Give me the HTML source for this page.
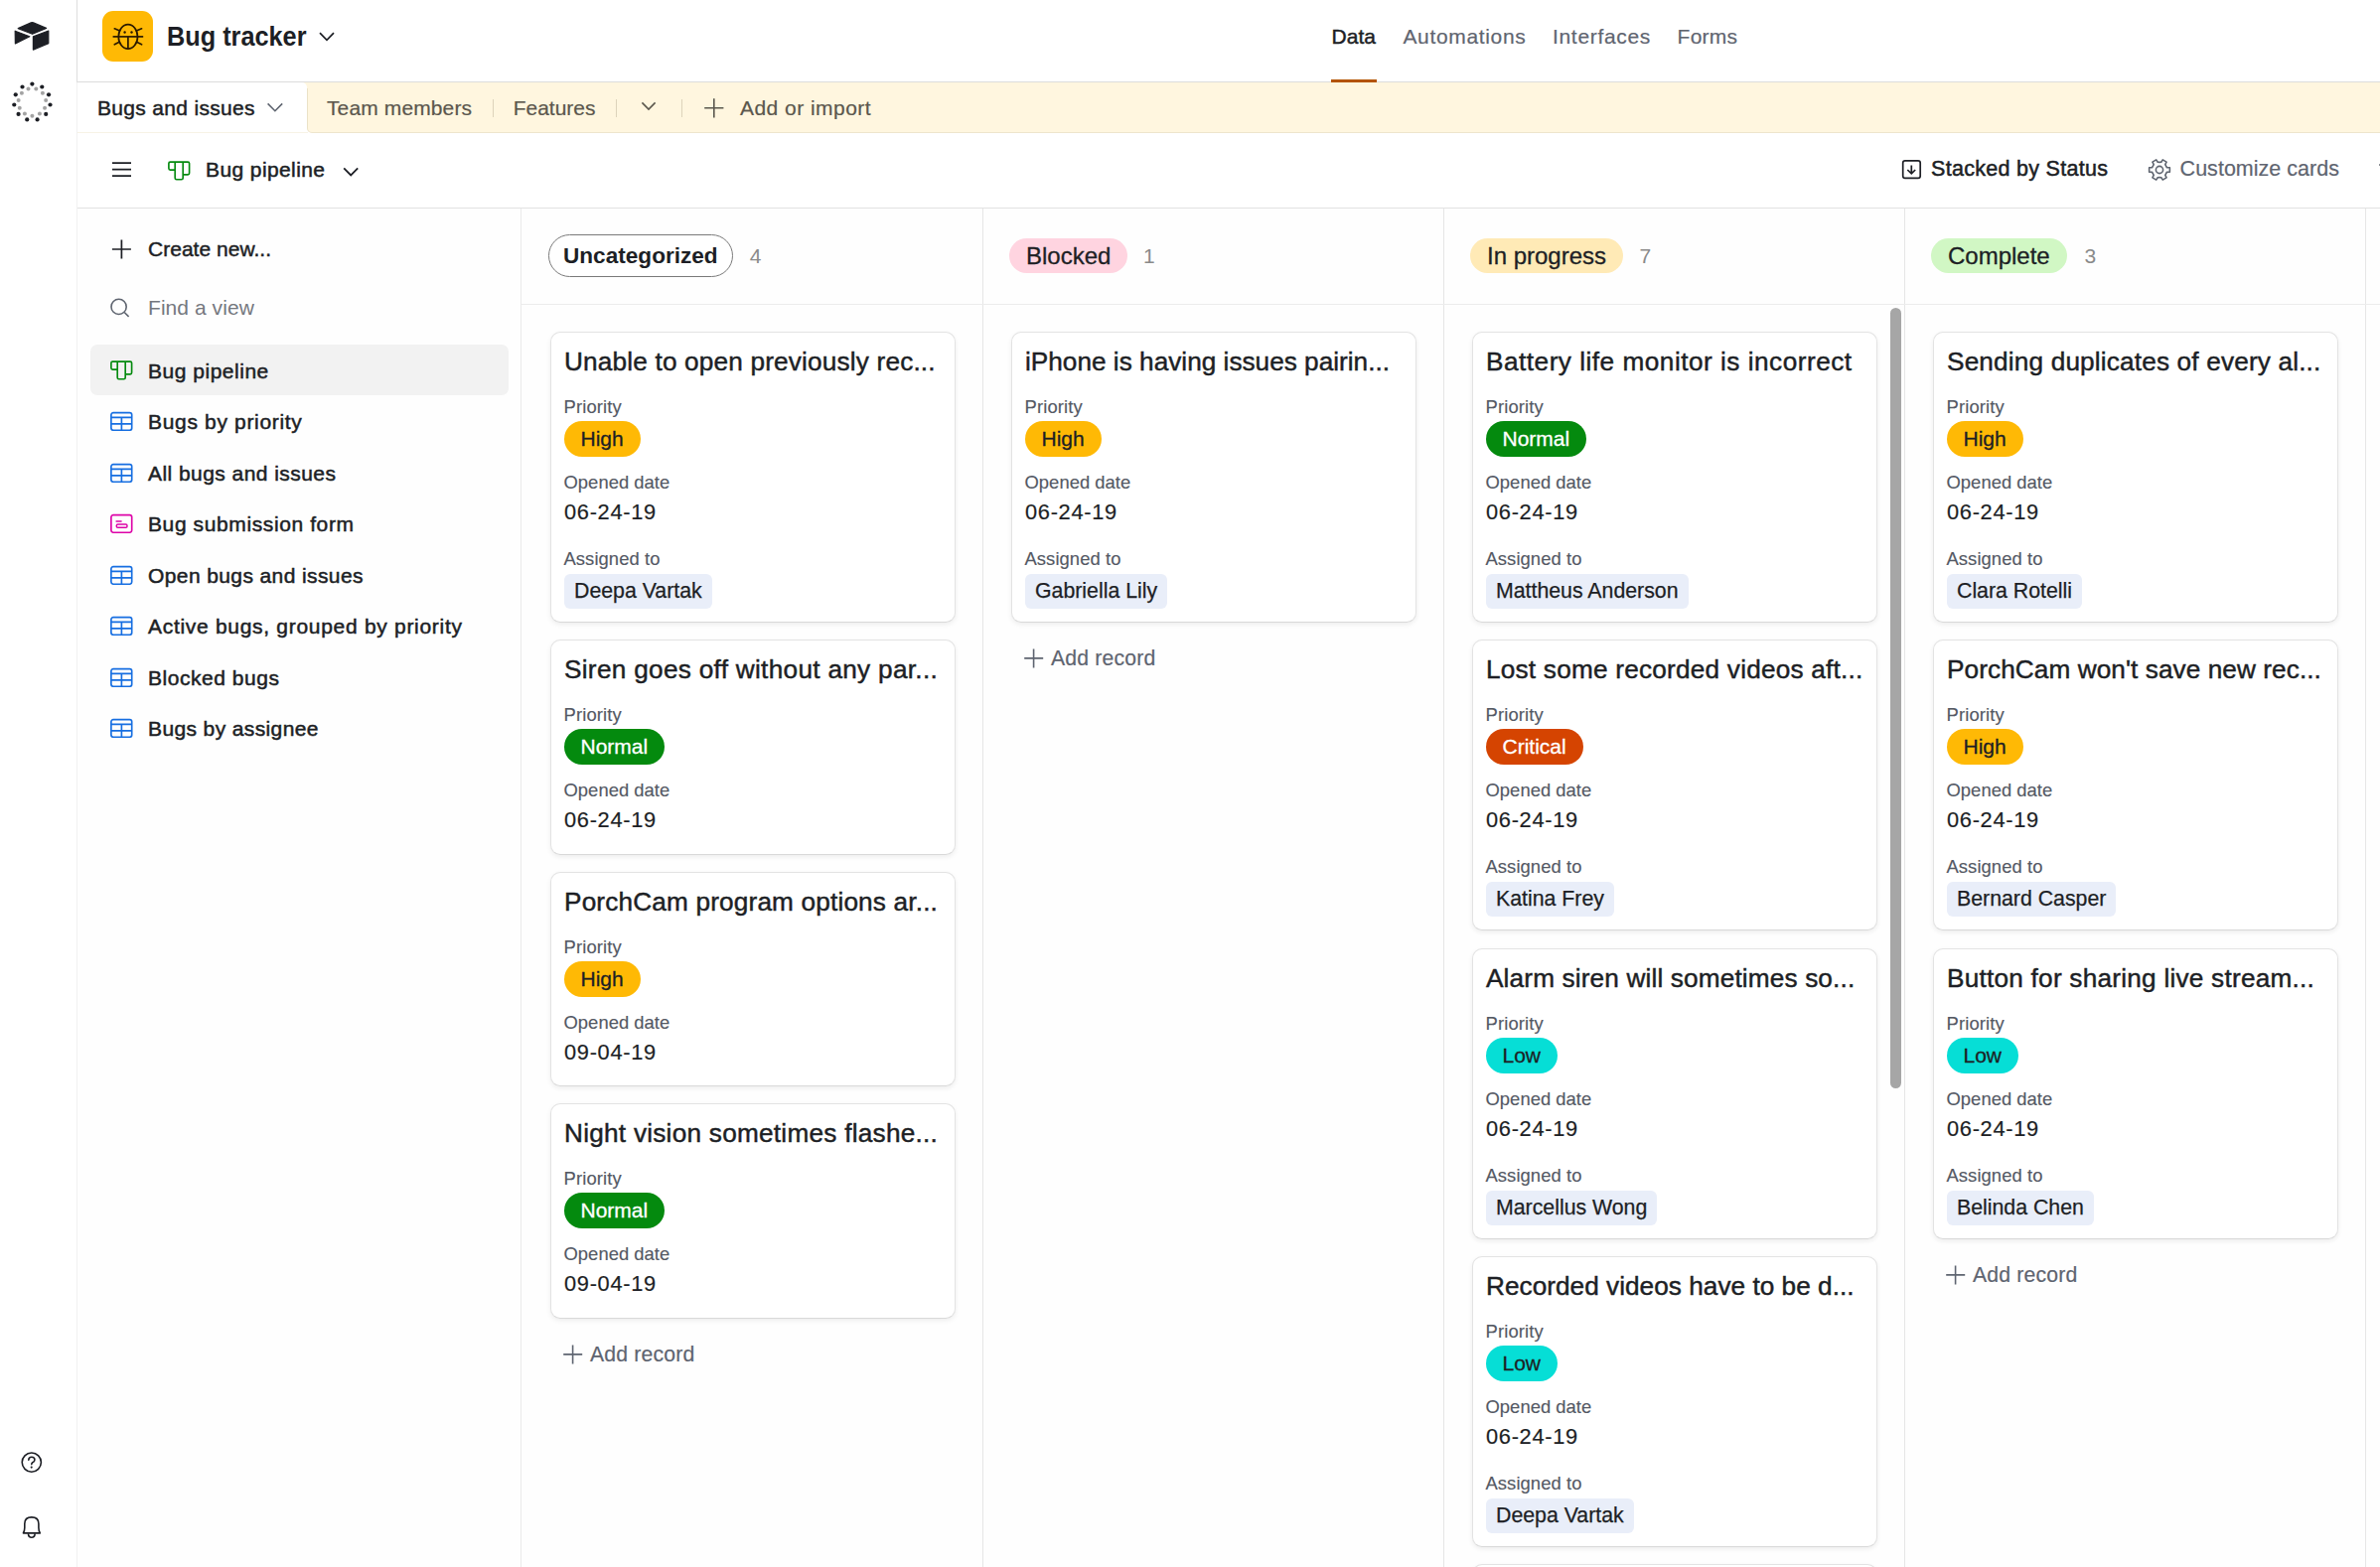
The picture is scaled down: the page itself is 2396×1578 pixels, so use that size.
<!DOCTYPE html>
<html><head><meta charset="utf-8"><title>Bug tracker</title><style>
*{box-sizing:border-box;margin:0;padding:0}
html,body{width:2396px;height:1578px;overflow:hidden;background:#fff;font-family:'Liberation Sans',sans-serif;}
.abs{position:absolute}
.t{position:absolute;line-height:1;white-space:nowrap}
#rail{position:absolute;left:0;top:0;width:78px;height:1578px;background:#fff;border-right:1px solid #f1f1f1}
#hdr{position:absolute;left:78px;top:0;width:2318px;height:83px;background:#fff;border-bottom:1px solid #dcdcdc}
#tabbar{position:absolute;left:78px;top:83px;width:2318px;height:51px;background:#fff}
#toolbar{position:absolute;left:78px;top:134px;width:2318px;height:76px;background:#fff;border-bottom:1px solid #e2e2e2}
#sidebar{position:absolute;left:78px;top:210px;width:447px;height:1368px;background:#fefefe;border-right:1px solid #ebebeb}
.col{position:absolute;top:210px;height:1368px;background:#fefefe;border-right:1px solid #e6e6e6}
.pill{position:absolute;height:35px;line-height:35px;padding:0 17px;border-radius:18px;font-size:24px;color:#1d1f25;white-space:nowrap;-webkit-text-stroke:0.3px #1d1f25}
.pill.unc{top:236px;height:43px;line-height:41px;border:1px solid #7a7a7a;font-weight:bold;font-size:22.6px;padding:0 14px;border-radius:22px;background:#fff;-webkit-text-stroke:0}
.blk{background:#ffd4e0}
.inp{background:#ffeab6}
.cmp{background:#d1f7c4}
.card{position:absolute;width:408px;background:#fff;border:1px solid #e3e3e3;border-bottom-color:#d9d9d9;border-radius:10px;box-shadow:0 2px 5px rgba(0,0,0,0.07)}
.ppill{position:absolute;height:36px;line-height:36px;padding:0 17px 0 16.5px;border-radius:18px;font-size:21px;white-space:nowrap;-webkit-text-stroke:0.3px currentColor}
.chip{position:absolute;height:35px;line-height:35px;padding:0 10px;border-radius:6px;font-size:21.3px;background:#e9eef9;color:#1d1f25;white-space:nowrap;-webkit-text-stroke:0.25px #1d1f25}
</style></head>
<body>
<div id="rail"></div><div class="abs" style="left:77px;top:0;width:1px;height:83px;background:#dedede"></div><svg class="abs" style="left:0;top:0" width="77" height="62" viewBox="0 0 77 62">
<path d="M18.2 28.6 L31.2 22.9 Q32.4 22.4 33.6 22.9 L46.6 28.4 L32.6 34.3 Z" fill="#1d1f25" stroke="#1d1f25" stroke-width="1.2" stroke-linejoin="round"/>
<path d="M15.2 31.2 L29.8 36.8 L15.4 43.9 Z" fill="#1d1f25" stroke="#1d1f25" stroke-width="1.2" stroke-linejoin="round"/>
<path d="M33.4 36.9 L48.8 31.0 L48.8 43.6 L33.4 50.1 Z" fill="#1d1f25" stroke="#1d1f25" stroke-width="1.2" stroke-linejoin="round"/>
</svg><svg class="abs" style="left:0;top:0" width="77" height="140"><circle cx="32.40" cy="84.60" r="2.1" fill="#1d1f25"/><circle cx="36.32" cy="89.56" r="2.0" fill="#a3a3a3"/><circle cx="42.29" cy="87.51" r="2.1" fill="#1d1f25"/><circle cx="42.90" cy="93.80" r="2.0" fill="#a3a3a3"/><circle cx="49.05" cy="95.30" r="2.1" fill="#1d1f25"/><circle cx="46.16" cy="100.92" r="2.0" fill="#a3a3a3"/><circle cx="50.51" cy="105.50" r="2.1" fill="#1d1f25"/><circle cx="45.04" cy="108.67" r="2.0" fill="#a3a3a3"/><circle cx="46.23" cy="114.88" r="2.1" fill="#1d1f25"/><circle cx="39.91" cy="114.59" r="2.0" fill="#a3a3a3"/><circle cx="37.56" cy="120.46" r="2.1" fill="#1d1f25"/><circle cx="32.40" cy="116.80" r="2.0" fill="#a3a3a3"/><circle cx="27.24" cy="120.46" r="2.1" fill="#1d1f25"/><circle cx="24.89" cy="114.59" r="2.0" fill="#a3a3a3"/><circle cx="18.57" cy="114.88" r="2.1" fill="#1d1f25"/><circle cx="19.76" cy="108.67" r="2.0" fill="#a3a3a3"/><circle cx="14.29" cy="105.50" r="2.1" fill="#1d1f25"/><circle cx="18.64" cy="100.92" r="2.0" fill="#a3a3a3"/><circle cx="15.75" cy="95.30" r="2.1" fill="#1d1f25"/><circle cx="21.90" cy="93.80" r="2.0" fill="#a3a3a3"/><circle cx="22.51" cy="87.51" r="2.1" fill="#1d1f25"/><circle cx="28.48" cy="89.56" r="2.0" fill="#a3a3a3"/></svg><svg class="abs" style="left:0;top:1450px" width="77" height="128" viewBox="0 1450 77 128">
<circle cx="31.8" cy="1472.6" r="9.6" fill="none" stroke="#1d1f25" stroke-width="1.6"/>
<path d="M28.8 1470.2 Q28.9 1467.3 31.9 1467.3 Q34.9 1467.3 34.9 1470 Q34.9 1471.8 32.8 1472.8 Q31.8 1473.4 31.8 1474.6" fill="none" stroke="#1d1f25" stroke-width="1.6" stroke-linecap="round"/>
<circle cx="31.7" cy="1477.6" r="1.05" fill="#1d1f25"/>
<path d="M23.4 1543.9 L40.3 1543.9 Q38.9 1541.5 38.9 1538.5 L38.9 1534.5 Q38.9 1527.9 31.8 1527.9 Q24.8 1527.9 24.8 1534.5 L24.8 1538.5 Q24.8 1541.5 23.4 1543.9 Z" fill="none" stroke="#1d1f25" stroke-width="1.6" stroke-linejoin="round"/>
<path d="M28.4 1544.4 Q28.7 1548.3 31.8 1548.3 Q34.9 1548.3 35.2 1544.4" fill="none" stroke="#1d1f25" stroke-width="1.6"/>
</svg><div id="hdr"></div><div class="abs" style="left:103px;top:11px;width:51px;height:51px;border-radius:11px;background:#ffb905"></div><svg class="abs" style="left:103px;top:11px" width="51" height="51" viewBox="103 11 51 51">
<ellipse cx="128.9" cy="36.9" rx="9.6" ry="12.3" fill="none" stroke="#2a1a00" stroke-width="1.7"/>
<line x1="113.6" y1="36.9" x2="144.2" y2="36.9" stroke="#2a1a00" stroke-width="1.7"/>
<line x1="128.9" y1="36.9" x2="128.9" y2="49.2" stroke="#2a1a00" stroke-width="1.7"/>
<circle cx="125.6" cy="32.5" r="1.2" fill="#2a1a00"/><circle cx="132.5" cy="32.5" r="1.2" fill="#2a1a00"/>
<path d="M115.3 28.8 L120.6 31.0 M142.6 28.8 L137.3 31.0 M115.3 44.8 L120.2 42.2 M142.6 44.8 L137.6 42.2" stroke="#2a1a00" stroke-width="1.7" stroke-linecap="round"/>
</svg><div class="t" style="left:167.5px;top:22.7px;font-size:27.8px;color:#1d1f25;font-weight:bold;transform:scaleX(0.9094);transform-origin:0 0;">Bug tracker</div><svg class="abs" style="left:320px;top:31px" width="18" height="12"><path d="M2 2.2 L9 9.4 L16 2.2" fill="none" stroke="#1d1f25" stroke-width="1.7"/></svg><div class="t" style="left:1340.5px;top:26.2px;font-size:21px;color:#1d1f25;font-weight:normal;letter-spacing:0.033px;-webkit-text-stroke:0.45px #1d1f25;">Data</div><div class="abs" style="left:1340px;top:80px;width:46px;height:3px;background:#b35300"></div><div class="t" style="left:1412.4px;top:26.2px;font-size:21px;color:#5f6570;font-weight:normal;letter-spacing:0.670px;-webkit-text-stroke:0.2px #5f6570;">Automations</div><div class="t" style="left:1563.0px;top:26.2px;font-size:21px;color:#5f6570;font-weight:normal;letter-spacing:0.678px;-webkit-text-stroke:0.2px #5f6570;">Interfaces</div><div class="t" style="left:1688.6px;top:26.2px;font-size:21px;color:#5f6570;font-weight:normal;letter-spacing:0.225px;-webkit-text-stroke:0.2px #5f6570;">Forms</div><div id="tabbar"></div><div class="abs" style="left:78px;top:133px;width:232px;height:1px;background:#f7f3e6"></div><div class="abs" style="left:309px;top:83px;width:2087px;height:51px;background:#fff6df;border-left:1px solid #ebe2c7;border-bottom:1px solid #eee5cd;border-bottom-left-radius:5px"></div><div class="abs" style="left:304px;top:83px;width:6px;height:6px;background:#fff6df"></div><div class="abs" style="left:78px;top:83px;width:231px;height:50px;background:#fff;border-top-right-radius:5px"></div><div class="t" style="left:98.0px;top:98.2px;font-size:21px;color:#1d1f25;font-weight:normal;letter-spacing:0.321px;-webkit-text-stroke:0.45px #1d1f25;">Bugs and issues</div><svg class="abs" style="left:266px;top:101px" width="20" height="14"><path d="M3.6 3.4 L10.9 10.7 L18.2 3.4" fill="none" stroke="#5f6570" stroke-width="1.6"/></svg><div class="t" style="left:329.0px;top:98.2px;font-size:21px;color:#5b574d;font-weight:normal;letter-spacing:0.118px;-webkit-text-stroke:0.2px #5b574d;">Team members</div><div class="abs" style="left:495.5px;top:99.5px;width:1px;height:18px;background:#ddd3bb"></div><div class="t" style="left:516.7px;top:98.2px;font-size:21px;color:#5b574d;font-weight:normal;letter-spacing:-0.014px;-webkit-text-stroke:0.2px #5b574d;">Features</div><div class="abs" style="left:619.5px;top:99.5px;width:1px;height:18px;background:#ddd3bb"></div><svg class="abs" style="left:644px;top:100px" width="18" height="14"><path d="M2.4 3.4 L9 10 L15.6 3.4" fill="none" stroke="#5b574d" stroke-width="1.6"/></svg><div class="abs" style="left:685.5px;top:99.5px;width:1px;height:18px;background:#ddd3bb"></div><svg class="abs" style="left:705px;top:96px" width="26" height="26"><path d="M13.8 3.2 L13.8 22.4 M4.2 12.8 L23.4 12.8" fill="none" stroke="#5b574d" stroke-width="1.6"/></svg><div class="t" style="left:745.0px;top:98.2px;font-size:21px;color:#5b574d;font-weight:normal;letter-spacing:0.467px;-webkit-text-stroke:0.2px #5b574d;">Add or import</div><div id="toolbar"></div><svg class="abs" style="left:110px;top:160px" width="26" height="22"><path d="M3 4.1 L22 4.1 M3 10.6 L22 10.6 M3 17.2 L22 17.2" stroke="#1d1f25" stroke-width="1.7"/></svg><svg class="abs" style="left:168px;top:160.5px" width="24" height="21" viewBox="0 0 24 21"><path d="M1.9 3.6 Q1.9 2.1 3.4 2.1 L21.1 2.1 Q22.6 2.1 22.6 3.6 L22.6 13.3 Q22.6 14.8 21.1 14.8 L16.2 14.8 L16.2 18.2 Q16.2 19.7 14.7 19.7 L9.7 19.7 Q8.2 19.7 8.2 18.2 L8.2 10.1 L3.4 10.1 Q1.9 10.1 1.9 8.6 Z M8.2 2.1 L8.2 10.1 M16.2 2.1 L16.2 14.8" fill="none" stroke="#048a0e" stroke-width="1.65" stroke-linejoin="round"/></svg><div class="t" style="left:207.0px;top:160.2px;font-size:21px;color:#1d1f25;font-weight:normal;letter-spacing:0.400px;-webkit-text-stroke:0.5px #1d1f25;">Bug pipeline</div><svg class="abs" style="left:343px;top:166px" width="20" height="14"><path d="M3.2 3.4 L10.2 10.4 L17.2 3.4" fill="none" stroke="#1d1f25" stroke-width="1.8"/></svg><svg class="abs" style="left:1912px;top:158px" width="26" height="26" viewBox="0 0 26 26">
<rect x="3.7" y="3.9" width="17.5" height="17.5" rx="2.2" fill="none" stroke="#1d1f25" stroke-width="1.7"/>
<path d="M12.3 8.4 L12.3 16.6 M8.3 13 L12.3 16.8 L16.2 13" fill="none" stroke="#1d1f25" stroke-width="1.7"/></svg><div class="t" style="left:1944.0px;top:160.0px;font-size:21.5px;color:#1d1f25;font-weight:normal;letter-spacing:0.294px;-webkit-text-stroke:0.5px #1d1f25;">Stacked by Status</div><svg class="abs" style="left:2161.4px;top:157.7px" width="26" height="26" viewBox="0 0 26 26">
<path d="M19.58 9.20 L20.55 10.69 L23.37 10.80 L23.37 15.20 L20.55 15.31 L19.58 16.80 L18.78 18.39 L20.09 20.88 L16.28 23.08 L14.78 20.70 L13.00 20.60 L11.22 20.70 L9.72 23.08 L5.91 20.88 L7.22 18.39 L6.42 16.80 L5.45 15.31 L2.63 15.20 L2.63 10.80 L5.45 10.69 L6.42 9.20 L7.22 7.61 L5.91 5.12 L9.72 2.92 L11.22 5.30 L13.00 5.40 L14.78 5.30 L16.28 2.92 L20.09 5.12 L18.78 7.61 Z" fill="none" stroke="#5f6570" stroke-width="1.6" stroke-linejoin="round"/>
<circle cx="13" cy="13" r="3.6" fill="none" stroke="#5f6570" stroke-width="1.6"/></svg><div class="t" style="left:2194.6px;top:160.0px;font-size:21.5px;color:#5f6570;font-weight:normal;letter-spacing:0.021px;-webkit-text-stroke:0.2px #5f6570;">Customize cards</div><div class="abs" style="left:2395px;top:164.8px;width:1px;height:2.4px;background:#8a8d93"></div><div id="sidebar"></div><svg class="abs" style="left:110px;top:239px" width="24" height="24"><path d="M12.4 2.5 L12.4 21.5 M2.9 12 L21.9 12" stroke="#1d1f25" stroke-width="1.7"/></svg><div class="t" style="left:149.0px;top:240.4px;font-size:21px;color:#1d1f25;font-weight:normal;letter-spacing:0.025px;-webkit-text-stroke:0.45px #1d1f25;">Create new...</div><svg class="abs" style="left:109px;top:298px" width="24" height="24"><circle cx="10.6" cy="10.9" r="7.6" fill="none" stroke="#5f6570" stroke-width="1.6"/><path d="M16.2 16.5 L20.6 20.9" stroke="#5f6570" stroke-width="1.6"/></svg><div class="t" style="left:149.0px;top:299.0px;font-size:21px;color:#75787e;font-weight:normal;letter-spacing:0.060px;">Find a view</div><div class="abs" style="left:91px;top:347px;width:421px;height:51px;border-radius:7px;background:#f2f2f2"></div><svg class="abs" style="left:110px;top:361.9px" width="24" height="21" viewBox="0 0 24 21"><path d="M1.9 3.6 Q1.9 2.1 3.4 2.1 L21.1 2.1 Q22.6 2.1 22.6 3.6 L22.6 13.3 Q22.6 14.8 21.1 14.8 L16.2 14.8 L16.2 18.2 Q16.2 19.7 14.7 19.7 L9.7 19.7 Q8.2 19.7 8.2 18.2 L8.2 10.1 L3.4 10.1 Q1.9 10.1 1.9 8.6 Z M8.2 2.1 L8.2 10.1 M16.2 2.1 L16.2 14.8" fill="none" stroke="#048a0e" stroke-width="1.65" stroke-linejoin="round"/></svg><div class="t" style="left:149.0px;top:362.6px;font-size:21px;color:#1d1f25;font-weight:normal;letter-spacing:0.518px;-webkit-text-stroke:0.5px #1d1f25;">Bug pipeline</div><svg class="abs" style="left:110px;top:413.4px" width="24" height="21" viewBox="0 0 24 21"><rect x="1.9" y="2.6" width="20.8" height="17.6" rx="2.2" fill="none" stroke="#166ee1" stroke-width="1.65"/><path d="M1.9 7.3 L22.7 7.3 M1.9 13.8 L22.7 13.8 M12.4 7.3 L12.4 20.2" stroke="#166ee1" stroke-width="1.65"/></svg><div class="t" style="left:149.0px;top:414.1px;font-size:21px;color:#1d1f25;font-weight:normal;letter-spacing:0.673px;-webkit-text-stroke:0.5px #1d1f25;">Bugs by priority</div><svg class="abs" style="left:110px;top:464.9px" width="24" height="21" viewBox="0 0 24 21"><rect x="1.9" y="2.6" width="20.8" height="17.6" rx="2.2" fill="none" stroke="#166ee1" stroke-width="1.65"/><path d="M1.9 7.3 L22.7 7.3 M1.9 13.8 L22.7 13.8 M12.4 7.3 L12.4 20.2" stroke="#166ee1" stroke-width="1.65"/></svg><div class="t" style="left:149.0px;top:465.6px;font-size:21px;color:#1d1f25;font-weight:normal;letter-spacing:0.444px;-webkit-text-stroke:0.5px #1d1f25;">All bugs and issues</div><svg class="abs" style="left:110px;top:516.4px" width="24" height="21" viewBox="0 0 24 21"><rect x="1.9" y="2.6" width="20.8" height="17.6" rx="2.2" fill="none" stroke="#dd04a8" stroke-width="1.65"/><path d="M7.2 9 L12 9" stroke="#dd04a8" stroke-width="1.65" stroke-linecap="round"/><rect x="7.3" y="12.1" width="10.7" height="3.2" rx="1.4" fill="none" stroke="#dd04a8" stroke-width="1.5"/></svg><div class="t" style="left:149.0px;top:517.1px;font-size:21px;color:#1d1f25;font-weight:normal;letter-spacing:0.606px;-webkit-text-stroke:0.5px #1d1f25;">Bug submission form</div><svg class="abs" style="left:110px;top:567.9px" width="24" height="21" viewBox="0 0 24 21"><rect x="1.9" y="2.6" width="20.8" height="17.6" rx="2.2" fill="none" stroke="#166ee1" stroke-width="1.65"/><path d="M1.9 7.3 L22.7 7.3 M1.9 13.8 L22.7 13.8 M12.4 7.3 L12.4 20.2" stroke="#166ee1" stroke-width="1.65"/></svg><div class="t" style="left:149.0px;top:568.6px;font-size:21px;color:#1d1f25;font-weight:normal;letter-spacing:0.395px;-webkit-text-stroke:0.5px #1d1f25;">Open bugs and issues</div><svg class="abs" style="left:110px;top:619.4px" width="24" height="21" viewBox="0 0 24 21"><rect x="1.9" y="2.6" width="20.8" height="17.6" rx="2.2" fill="none" stroke="#166ee1" stroke-width="1.65"/><path d="M1.9 7.3 L22.7 7.3 M1.9 13.8 L22.7 13.8 M12.4 7.3 L12.4 20.2" stroke="#166ee1" stroke-width="1.65"/></svg><div class="t" style="left:149.0px;top:620.1px;font-size:21px;color:#1d1f25;font-weight:normal;letter-spacing:0.703px;-webkit-text-stroke:0.5px #1d1f25;">Active bugs, grouped by priority</div><svg class="abs" style="left:110px;top:670.9px" width="24" height="21" viewBox="0 0 24 21"><rect x="1.9" y="2.6" width="20.8" height="17.6" rx="2.2" fill="none" stroke="#166ee1" stroke-width="1.65"/><path d="M1.9 7.3 L22.7 7.3 M1.9 13.8 L22.7 13.8 M12.4 7.3 L12.4 20.2" stroke="#166ee1" stroke-width="1.65"/></svg><div class="t" style="left:149.0px;top:671.6px;font-size:21px;color:#1d1f25;font-weight:normal;letter-spacing:0.536px;-webkit-text-stroke:0.5px #1d1f25;">Blocked bugs</div><svg class="abs" style="left:110px;top:722.4px" width="24" height="21" viewBox="0 0 24 21"><rect x="1.9" y="2.6" width="20.8" height="17.6" rx="2.2" fill="none" stroke="#166ee1" stroke-width="1.65"/><path d="M1.9 7.3 L22.7 7.3 M1.9 13.8 L22.7 13.8 M12.4 7.3 L12.4 20.2" stroke="#166ee1" stroke-width="1.65"/></svg><div class="t" style="left:149.0px;top:723.1px;font-size:21px;color:#1d1f25;font-weight:normal;letter-spacing:0.380px;-webkit-text-stroke:0.5px #1d1f25;">Bugs by assignee</div><div class="col" style="left:525px;width:465px"></div><div class="col" style="left:990px;width:464px"></div><div class="col" style="left:1454px;width:464px"></div><div class="col" style="left:1918px;width:464px"></div><div class="col" style="left:2382px;width:464px"></div><div class="abs" style="left:525px;top:306px;width:1871px;height:1px;background:#ececec"></div><div class="pill unc" style="left:552px;top:236px;">Uncategorized</div><div class="pill blk" style="left:1016px;top:240px;">Blocked</div><div class="pill inp" style="left:1480px;top:240px;">In progress</div><div class="pill cmp" style="left:1944px;top:240px;">Complete</div><div class="t" style="left:754.7px;top:246.8px;font-size:21px;color:#8a8a8a;font-weight:normal;">4</div><div class="t" style="left:1151.0px;top:246.8px;font-size:21px;color:#8a8a8a;font-weight:normal;">1</div><div class="t" style="left:1650.5px;top:246.8px;font-size:21px;color:#8a8a8a;font-weight:normal;">7</div><div class="t" style="left:2098.5px;top:246.8px;font-size:21px;color:#8a8a8a;font-weight:normal;">3</div><div class="card" style="left:554px;top:334px;height:293px"></div><div class="t" style="left:568.0px;top:351.1px;font-size:26.2px;color:#1d1f25;font-weight:normal;letter-spacing:0.171px;-webkit-text-stroke:0.45px #1d1f25;">Unable to open previously rec...</div><div class="t" style="left:567.5px;top:401.0px;font-size:18.4px;color:#545964;font-weight:normal;letter-spacing:0.143px;-webkit-text-stroke:0.15px #545964;">Priority</div><div class="ppill" style="left:568px;top:424px;background:#ffb905;color:#1d1f25">High</div><div class="t" style="left:567.5px;top:476.5px;font-size:18.4px;color:#545964;font-weight:normal;letter-spacing:0.040px;-webkit-text-stroke:0.15px #545964;">Opened date</div><div class="t" style="left:568.0px;top:505.0px;font-size:21.8px;color:#1d1f25;font-weight:normal;letter-spacing:0.700px;-webkit-text-stroke:0.2px #1d1f25;">06-24-19</div><div class="t" style="left:567.5px;top:553.6px;font-size:18.4px;color:#545964;font-weight:normal;letter-spacing:0.080px;-webkit-text-stroke:0.15px #545964;">Assigned to</div><div class="chip" style="left:568px;top:577.8px">Deepa Vartak</div><div class="card" style="left:554px;top:644px;height:217px"></div><div class="t" style="left:568.0px;top:661.1px;font-size:26.2px;color:#1d1f25;font-weight:normal;letter-spacing:0.294px;-webkit-text-stroke:0.45px #1d1f25;">Siren goes off without any par...</div><div class="t" style="left:567.5px;top:711.0px;font-size:18.4px;color:#545964;font-weight:normal;letter-spacing:0.143px;-webkit-text-stroke:0.15px #545964;">Priority</div><div class="ppill" style="left:568px;top:734px;background:#048a0e;color:#ffffff">Normal</div><div class="t" style="left:567.5px;top:786.5px;font-size:18.4px;color:#545964;font-weight:normal;letter-spacing:0.040px;-webkit-text-stroke:0.15px #545964;">Opened date</div><div class="t" style="left:568.0px;top:815.0px;font-size:21.8px;color:#1d1f25;font-weight:normal;letter-spacing:0.700px;-webkit-text-stroke:0.2px #1d1f25;">06-24-19</div><div class="card" style="left:554px;top:878px;height:216px"></div><div class="t" style="left:568.0px;top:895.1px;font-size:26.2px;color:#1d1f25;font-weight:normal;letter-spacing:0.162px;-webkit-text-stroke:0.45px #1d1f25;">PorchCam program options ar...</div><div class="t" style="left:567.5px;top:945.0px;font-size:18.4px;color:#545964;font-weight:normal;letter-spacing:0.143px;-webkit-text-stroke:0.15px #545964;">Priority</div><div class="ppill" style="left:568px;top:968px;background:#ffb905;color:#1d1f25">High</div><div class="t" style="left:567.5px;top:1020.5px;font-size:18.4px;color:#545964;font-weight:normal;letter-spacing:0.040px;-webkit-text-stroke:0.15px #545964;">Opened date</div><div class="t" style="left:568.0px;top:1049.0px;font-size:21.8px;color:#1d1f25;font-weight:normal;letter-spacing:0.700px;-webkit-text-stroke:0.2px #1d1f25;">09-04-19</div><div class="card" style="left:554px;top:1111px;height:217px"></div><div class="t" style="left:568.0px;top:1128.1px;font-size:26.2px;color:#1d1f25;font-weight:normal;letter-spacing:0.245px;-webkit-text-stroke:0.45px #1d1f25;">Night vision sometimes flashe...</div><div class="t" style="left:567.5px;top:1178.0px;font-size:18.4px;color:#545964;font-weight:normal;letter-spacing:0.143px;-webkit-text-stroke:0.15px #545964;">Priority</div><div class="ppill" style="left:568px;top:1201px;background:#048a0e;color:#ffffff">Normal</div><div class="t" style="left:567.5px;top:1253.5px;font-size:18.4px;color:#545964;font-weight:normal;letter-spacing:0.040px;-webkit-text-stroke:0.15px #545964;">Opened date</div><div class="t" style="left:568.0px;top:1282.0px;font-size:21.8px;color:#1d1f25;font-weight:normal;letter-spacing:0.700px;-webkit-text-stroke:0.2px #1d1f25;">09-04-19</div><svg class="abs" style="left:564px;top:1352.2px" width="24" height="24"><path d="M12.6 2.4 L12.6 21.4 M3.2 11.9 L22.2 11.9" stroke="#5e6470" stroke-width="1.6"/></svg><div class="t" style="left:594.0px;top:1353.3px;font-size:21.2px;color:#5e6470;font-weight:normal;letter-spacing:0.189px;-webkit-text-stroke:0.2px #5e6470;">Add record</div><div class="card" style="left:1018px;top:334px;height:293px"></div><div class="t" style="left:1032.0px;top:351.1px;font-size:26.2px;color:#1d1f25;font-weight:normal;letter-spacing:0.006px;-webkit-text-stroke:0.45px #1d1f25;">iPhone is having issues pairin...</div><div class="t" style="left:1031.5px;top:401.0px;font-size:18.4px;color:#545964;font-weight:normal;letter-spacing:0.143px;-webkit-text-stroke:0.15px #545964;">Priority</div><div class="ppill" style="left:1032px;top:424px;background:#ffb905;color:#1d1f25">High</div><div class="t" style="left:1031.5px;top:476.5px;font-size:18.4px;color:#545964;font-weight:normal;letter-spacing:0.040px;-webkit-text-stroke:0.15px #545964;">Opened date</div><div class="t" style="left:1032.0px;top:505.0px;font-size:21.8px;color:#1d1f25;font-weight:normal;letter-spacing:0.700px;-webkit-text-stroke:0.2px #1d1f25;">06-24-19</div><div class="t" style="left:1031.5px;top:553.6px;font-size:18.4px;color:#545964;font-weight:normal;letter-spacing:0.080px;-webkit-text-stroke:0.15px #545964;">Assigned to</div><div class="chip" style="left:1032px;top:577.8px">Gabriella Lily</div><svg class="abs" style="left:1028px;top:650.9px" width="24" height="24"><path d="M12.6 2.4 L12.6 21.4 M3.2 11.9 L22.2 11.9" stroke="#5e6470" stroke-width="1.6"/></svg><div class="t" style="left:1058.0px;top:652.0px;font-size:21.2px;color:#5e6470;font-weight:normal;letter-spacing:0.189px;-webkit-text-stroke:0.2px #5e6470;">Add record</div><div class="card" style="left:1482px;top:334px;height:293px"></div><div class="t" style="left:1496.0px;top:351.1px;font-size:26.2px;color:#1d1f25;font-weight:normal;letter-spacing:0.497px;-webkit-text-stroke:0.45px #1d1f25;">Battery life monitor is incorrect</div><div class="t" style="left:1495.5px;top:401.0px;font-size:18.4px;color:#545964;font-weight:normal;letter-spacing:0.143px;-webkit-text-stroke:0.15px #545964;">Priority</div><div class="ppill" style="left:1496px;top:424px;background:#048a0e;color:#ffffff">Normal</div><div class="t" style="left:1495.5px;top:476.5px;font-size:18.4px;color:#545964;font-weight:normal;letter-spacing:0.040px;-webkit-text-stroke:0.15px #545964;">Opened date</div><div class="t" style="left:1496.0px;top:505.0px;font-size:21.8px;color:#1d1f25;font-weight:normal;letter-spacing:0.700px;-webkit-text-stroke:0.2px #1d1f25;">06-24-19</div><div class="t" style="left:1495.5px;top:553.6px;font-size:18.4px;color:#545964;font-weight:normal;letter-spacing:0.080px;-webkit-text-stroke:0.15px #545964;">Assigned to</div><div class="chip" style="left:1496px;top:577.8px">Mattheus Anderson</div><div class="card" style="left:1482px;top:644px;height:293px"></div><div class="t" style="left:1496.0px;top:661.1px;font-size:26.2px;color:#1d1f25;font-weight:normal;letter-spacing:0.216px;-webkit-text-stroke:0.45px #1d1f25;">Lost some recorded videos aft...</div><div class="t" style="left:1495.5px;top:711.0px;font-size:18.4px;color:#545964;font-weight:normal;letter-spacing:0.143px;-webkit-text-stroke:0.15px #545964;">Priority</div><div class="ppill" style="left:1496px;top:734px;background:#d54401;color:#ffffff">Critical</div><div class="t" style="left:1495.5px;top:786.5px;font-size:18.4px;color:#545964;font-weight:normal;letter-spacing:0.040px;-webkit-text-stroke:0.15px #545964;">Opened date</div><div class="t" style="left:1496.0px;top:815.0px;font-size:21.8px;color:#1d1f25;font-weight:normal;letter-spacing:0.700px;-webkit-text-stroke:0.2px #1d1f25;">06-24-19</div><div class="t" style="left:1495.5px;top:863.6px;font-size:18.4px;color:#545964;font-weight:normal;letter-spacing:0.080px;-webkit-text-stroke:0.15px #545964;">Assigned to</div><div class="chip" style="left:1496px;top:887.8px">Katina Frey</div><div class="card" style="left:1482px;top:955px;height:293px"></div><div class="t" style="left:1496.0px;top:972.1px;font-size:26.2px;color:#1d1f25;font-weight:normal;letter-spacing:0.145px;-webkit-text-stroke:0.45px #1d1f25;">Alarm siren will sometimes so...</div><div class="t" style="left:1495.5px;top:1022.0px;font-size:18.4px;color:#545964;font-weight:normal;letter-spacing:0.143px;-webkit-text-stroke:0.15px #545964;">Priority</div><div class="ppill" style="left:1496px;top:1045px;background:#06ded6;color:#1d1f25">Low</div><div class="t" style="left:1495.5px;top:1097.5px;font-size:18.4px;color:#545964;font-weight:normal;letter-spacing:0.040px;-webkit-text-stroke:0.15px #545964;">Opened date</div><div class="t" style="left:1496.0px;top:1126.0px;font-size:21.8px;color:#1d1f25;font-weight:normal;letter-spacing:0.700px;-webkit-text-stroke:0.2px #1d1f25;">06-24-19</div><div class="t" style="left:1495.5px;top:1174.6px;font-size:18.4px;color:#545964;font-weight:normal;letter-spacing:0.080px;-webkit-text-stroke:0.15px #545964;">Assigned to</div><div class="chip" style="left:1496px;top:1198.8px">Marcellus Wong</div><div class="card" style="left:1482px;top:1265px;height:293px"></div><div class="t" style="left:1496.0px;top:1282.1px;font-size:26.2px;color:#1d1f25;font-weight:normal;letter-spacing:0.027px;-webkit-text-stroke:0.45px #1d1f25;">Recorded videos have to be d...</div><div class="t" style="left:1495.5px;top:1332.0px;font-size:18.4px;color:#545964;font-weight:normal;letter-spacing:0.143px;-webkit-text-stroke:0.15px #545964;">Priority</div><div class="ppill" style="left:1496px;top:1355px;background:#06ded6;color:#1d1f25">Low</div><div class="t" style="left:1495.5px;top:1407.5px;font-size:18.4px;color:#545964;font-weight:normal;letter-spacing:0.040px;-webkit-text-stroke:0.15px #545964;">Opened date</div><div class="t" style="left:1496.0px;top:1436.0px;font-size:21.8px;color:#1d1f25;font-weight:normal;letter-spacing:0.700px;-webkit-text-stroke:0.2px #1d1f25;">06-24-19</div><div class="t" style="left:1495.5px;top:1484.6px;font-size:18.4px;color:#545964;font-weight:normal;letter-spacing:0.080px;-webkit-text-stroke:0.15px #545964;">Assigned to</div><div class="chip" style="left:1496px;top:1508.8px">Deepa Vartak</div><div class="card" style="left:1482px;top:1575px;height:100px"></div><div class="abs" style="left:1903px;top:310px;width:10.6px;height:786px;border-radius:6px;background:#a6a6a6"></div><div class="card" style="left:1946px;top:334px;height:293px"></div><div class="t" style="left:1960.0px;top:351.1px;font-size:26.2px;color:#1d1f25;font-weight:normal;letter-spacing:0.159px;-webkit-text-stroke:0.45px #1d1f25;">Sending duplicates of every al...</div><div class="t" style="left:1959.5px;top:401.0px;font-size:18.4px;color:#545964;font-weight:normal;letter-spacing:0.143px;-webkit-text-stroke:0.15px #545964;">Priority</div><div class="ppill" style="left:1960px;top:424px;background:#ffb905;color:#1d1f25">High</div><div class="t" style="left:1959.5px;top:476.5px;font-size:18.4px;color:#545964;font-weight:normal;letter-spacing:0.040px;-webkit-text-stroke:0.15px #545964;">Opened date</div><div class="t" style="left:1960.0px;top:505.0px;font-size:21.8px;color:#1d1f25;font-weight:normal;letter-spacing:0.700px;-webkit-text-stroke:0.2px #1d1f25;">06-24-19</div><div class="t" style="left:1959.5px;top:553.6px;font-size:18.4px;color:#545964;font-weight:normal;letter-spacing:0.080px;-webkit-text-stroke:0.15px #545964;">Assigned to</div><div class="chip" style="left:1960px;top:577.8px">Clara Rotelli</div><div class="card" style="left:1946px;top:644px;height:293px"></div><div class="t" style="left:1960.0px;top:661.1px;font-size:26.2px;color:#1d1f25;font-weight:normal;letter-spacing:0.076px;-webkit-text-stroke:0.45px #1d1f25;">PorchCam won't save new rec...</div><div class="t" style="left:1959.5px;top:711.0px;font-size:18.4px;color:#545964;font-weight:normal;letter-spacing:0.143px;-webkit-text-stroke:0.15px #545964;">Priority</div><div class="ppill" style="left:1960px;top:734px;background:#ffb905;color:#1d1f25">High</div><div class="t" style="left:1959.5px;top:786.5px;font-size:18.4px;color:#545964;font-weight:normal;letter-spacing:0.040px;-webkit-text-stroke:0.15px #545964;">Opened date</div><div class="t" style="left:1960.0px;top:815.0px;font-size:21.8px;color:#1d1f25;font-weight:normal;letter-spacing:0.700px;-webkit-text-stroke:0.2px #1d1f25;">06-24-19</div><div class="t" style="left:1959.5px;top:863.6px;font-size:18.4px;color:#545964;font-weight:normal;letter-spacing:0.080px;-webkit-text-stroke:0.15px #545964;">Assigned to</div><div class="chip" style="left:1960px;top:887.8px">Bernard Casper</div><div class="card" style="left:1946px;top:955px;height:293px"></div><div class="t" style="left:1960.0px;top:972.1px;font-size:26.2px;color:#1d1f25;font-weight:normal;letter-spacing:0.231px;-webkit-text-stroke:0.45px #1d1f25;">Button for sharing live stream...</div><div class="t" style="left:1959.5px;top:1022.0px;font-size:18.4px;color:#545964;font-weight:normal;letter-spacing:0.143px;-webkit-text-stroke:0.15px #545964;">Priority</div><div class="ppill" style="left:1960px;top:1045px;background:#06ded6;color:#1d1f25">Low</div><div class="t" style="left:1959.5px;top:1097.5px;font-size:18.4px;color:#545964;font-weight:normal;letter-spacing:0.040px;-webkit-text-stroke:0.15px #545964;">Opened date</div><div class="t" style="left:1960.0px;top:1126.0px;font-size:21.8px;color:#1d1f25;font-weight:normal;letter-spacing:0.700px;-webkit-text-stroke:0.2px #1d1f25;">06-24-19</div><div class="t" style="left:1959.5px;top:1174.6px;font-size:18.4px;color:#545964;font-weight:normal;letter-spacing:0.080px;-webkit-text-stroke:0.15px #545964;">Assigned to</div><div class="chip" style="left:1960px;top:1198.8px">Belinda Chen</div><svg class="abs" style="left:1956px;top:1272.1px" width="24" height="24"><path d="M12.6 2.4 L12.6 21.4 M3.2 11.9 L22.2 11.9" stroke="#5e6470" stroke-width="1.6"/></svg><div class="t" style="left:1986.0px;top:1273.2px;font-size:21.2px;color:#5e6470;font-weight:normal;letter-spacing:0.189px;-webkit-text-stroke:0.2px #5e6470;">Add record</div>
</body></html>
